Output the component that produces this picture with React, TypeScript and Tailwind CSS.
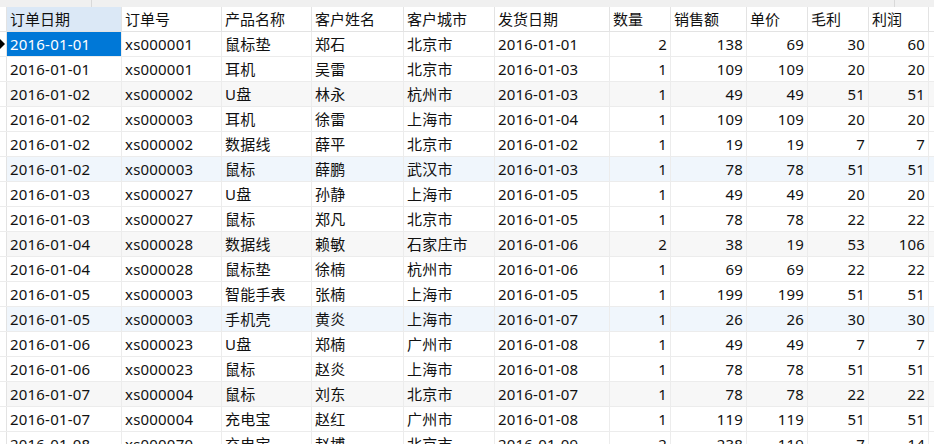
const columns = [
  { name: "订单日期", w: "w-[115px]", num: false },
  { name: "订单号", w: "w-[100px]", num: false },
  { name: "产品名称", w: "w-[90px]", num: false },
  { name: "客户姓名", w: "w-[92px]", num: false },
  { name: "客户城市", w: "w-[91px]", num: false },
  { name: "发货日期", w: "w-[115px]", num: false },
  { name: "数量", w: "w-[61px]", num: true },
  { name: "销售额", w: "w-[76px]", num: true },
  { name: "单价", w: "w-[61px]", num: true },
  { name: "毛利", w: "w-[61px]", num: true },
  { name: "利润", w: "w-[60px]", num: true },
];

const rows: (string | number)[][] = [
  ["2016-01-01", "xs000001", "鼠标垫", "郑石", "北京市", "2016-01-01", 2, 138, 69, 30, 60],
  ["2016-01-01", "xs000001", "耳机", "吴雷", "北京市", "2016-01-03", 1, 109, 109, 20, 20],
  ["2016-01-02", "xs000002", "U盘", "林永", "杭州市", "2016-01-03", 1, 49, 49, 51, 51],
  ["2016-01-02", "xs000003", "耳机", "徐雷", "上海市", "2016-01-04", 1, 109, 109, 20, 20],
  ["2016-01-02", "xs000002", "数据线", "薛平", "北京市", "2016-01-02", 1, 19, 19, 7, 7],
  ["2016-01-02", "xs000003", "鼠标", "薛鹏", "武汉市", "2016-01-03", 1, 78, 78, 51, 51],
  ["2016-01-03", "xs000027", "U盘", "孙静", "上海市", "2016-01-05", 1, 49, 49, 20, 20],
  ["2016-01-03", "xs000027", "鼠标", "郑凡", "北京市", "2016-01-05", 1, 78, 78, 22, 22],
  ["2016-01-04", "xs000028", "数据线", "赖敏", "石家庄市", "2016-01-06", 2, 38, 19, 53, 106],
  ["2016-01-04", "xs000028", "鼠标垫", "徐楠", "杭州市", "2016-01-06", 1, 69, 69, 22, 22],
  ["2016-01-05", "xs000003", "智能手表", "张楠", "上海市", "2016-01-05", 1, 199, 199, 51, 51],
  ["2016-01-05", "xs000003", "手机壳", "黄炎", "上海市", "2016-01-07", 1, 26, 26, 30, 30],
  ["2016-01-06", "xs000023", "U盘", "郑楠", "广州市", "2016-01-08", 1, 49, 49, 7, 7],
  ["2016-01-06", "xs000023", "鼠标", "赵炎", "上海市", "2016-01-08", 1, 78, 78, 51, 51],
  ["2016-01-07", "xs000004", "鼠标", "刘东", "北京市", "2016-01-07", 1, 78, 78, 22, 22],
  ["2016-01-07", "xs000004", "充电宝", "赵红", "广州市", "2016-01-08", 1, 119, 119, 51, 51],
  ["2016-01-08", "xs000070", "充电宝", "赵博", "北京市", "2016-01-09", 2, 238, 119, 7, 14],
];

function rowBg(i: number) {
  if (i % 6 === 2) return "bg-[#f7f7f7]";
  if (i % 6 === 5) return "bg-[#f0f6fc]";
  return "bg-white";
}

export default function App() {
  return (
    <div
      className="w-[934px] h-[444px] overflow-hidden bg-white text-[15px] text-[#111]"
      style={{ fontFamily: '"Noto Sans", "Noto Sans CJK SC", sans-serif' }}
    >
      {/* top strip */}
      <div className="flex h-[7px] bg-[#f0f0f0]">
        <div className="w-[92px] border-r border-[#d9d9d9]" />
        <div className="w-[803px] border-r border-[#d9d9d9]" />
      </div>

      {/* header */}
      <div className="flex h-[25px] border-b border-[#e3e3e3]">
        <div className="w-[7px] shrink-0 border-r border-[#e3e3e3] bg-white" />
        {columns.map((c, ci) => (
          <div
            key={c.name}
            className={`${c.w} shrink-0 flex items-center px-[3px] leading-none border-r border-[#e3e3e3] ${ci === 0 ? "bg-[#dbe8f6]" : "bg-white"}`}
          >
            {c.name}
          </div>
        ))}
      </div>

      {rows.map((r, ri) => (
        <div key={ri} className={`flex h-[25px] border-b border-[#ececec] ${rowBg(ri)}`}>
          <div className="w-[7px] shrink-0 border-r border-[#e3e3e3] bg-white flex items-center">
            {ri === 0 && (
              <div className="w-0 h-0 border-y-[5px] border-y-transparent border-l-[5px] border-l-black" />
            )}
          </div>
          {r.map((v, ci) => {
            const col = columns[ci];
            const sel = ri === 0 && ci === 0;
            return (
              <div
                key={ci}
                className={`${col.w} shrink-0 flex items-center leading-none whitespace-nowrap tracking-[0.2px] border-r border-[#ececec] ${col.num ? "justify-end pr-[3px]" : "pl-[3px]"} ${sel ? "bg-[#0078d7] text-white" : ""}`}
              >
                {v}
              </div>
            );
          })}
        </div>
      ))}
    </div>
  );
}
